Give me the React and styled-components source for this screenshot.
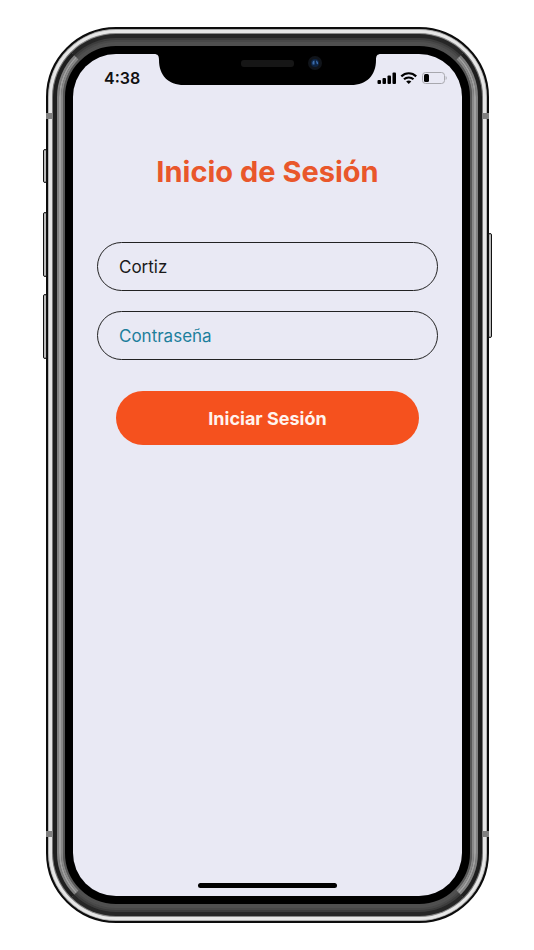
import { useState } from 'react';
import styled, { createGlobalStyle } from 'styled-components';

const GlobalStyle = createGlobalStyle`
  * {
    box-sizing: border-box;
  }

  body {
    margin: 0;
    background: #fff;
    font-family: Inter, 'Liberation Sans', sans-serif;
  }
`;

const Page = styled.main`
  padding: 27px 45px 27px 46px;
`;

//Phone
const Phone = styled.div`
  position: relative;
  display: flex;
  aspect-ratio: 443 / 896;
`;

const Ring = styled.div`
  display: flex;
  flex: 1;
  border: ${({ $width }) => $width}px solid;
  border-color: ${({ $ends, $sides }) => `${$ends} ${$sides}`};
  border-radius: ${({ $radius }) => $radius}px;
  background: ${({ $ends }) => $ends};
`;

const SideKey = styled.span`
  position: absolute;
  top: ${({ $top }) => $top}%;
  ${({ $side }) => $side}: -3px;
  width: 4px;
  height: ${({ $height }) => $height}%;
  border: 1px solid #111;
  border-radius: 2px;
  background: #bbb;
`;

const Antenna = styled.span`
  position: absolute;
  ${({ $edge }) => $edge}: 86px;
  ${({ $side }) => $side}: 0;
  width: 7px;
  height: 6px;
  background: #808080;
`;

const Screen = styled.div`
  position: relative;
  display: flex;
  flex: 1;
  flex-direction: column;
  border-radius: 43px;
  background: #e9e9f4;
`;

const NotchArea = styled.div`
  position: absolute;
  top: -1px;
  left: 0;
  right: 0;
  display: flex;
  justify-content: center;
`;

const NotchShape = styled.svg`
  display: block;
  width: 227px;
  height: 32px;
`;

//Status bar
const StatusBar = styled.header`
  display: flex;
  align-items: center;
  justify-content: space-between;
  height: 48px;
  padding: 0 15px 0 31px;
`;

const Time = styled.time`
  font-size: 16px;
  font-weight: 600;
  color: #111;
`;

const StatusIcons = styled.svg`
  width: 70px;
  height: 14px;
`;

//Form
const Form = styled.form`
  display: flex;
  flex: 1;
  flex-direction: column;
  gap: 20px;
  padding: 50px 24px 0;
`;

const Title = styled.h1`
  margin: 0 0 30px;
  font-size: 29px;
  font-weight: 700;
  line-height: 40px;
  text-align: center;
  color: #e9572b;
`;

const Field = styled.input`
  width: 100%;
  height: 49px;
  padding: 0 21px;
  border: 1px solid #222;
  border-radius: 25px;
  background: transparent;
  font-family: inherit;
  font-size: 17px;
  color: #1a1a1a;

  &::placeholder {
    color: #1d7f9c;
    opacity: 1;
  }
`;

const SubmitButton = styled.button`
  height: 54px;
  margin: 11px 19px 0;
  border: 0;
  border-radius: 27px;
  background: #f5511e;
  font-family: inherit;
  font-size: 18px;
  font-weight: 700;
  color: #fff3ee;
`;

const HomeBar = styled.div`
  align-self: center;
  width: 139px;
  height: 5px;
  margin-bottom: 8px;
  border-radius: 3px;
  background: #000;
`;

// from the outside in
const RINGS = [
  { width: 2, ends: '#0c0c0c', sides: '#0c0c0c' },
  { width: 1, ends: '#aaa', sides: '#b4b4b4' },
  { width: 3, ends: '#e6e6e6', sides: '#e6e6e6' },
  { width: 1, ends: '#8a8a8a', sides: '#777' },
  { width: 4, ends: '#262626', sides: '#1e1e1e' },
  { width: 2, ends: '#3c3c3c', sides: '#808080' },
  { width: 2, ends: '#484848', sides: '#a0a0a0' },
  { width: 2, ends: '#505050', sides: '#888' },
  { width: 2, ends: '#505050', sides: '#585858' },
  { width: 8, ends: '#000', sides: '#000' },
];

const KEYS = [
  { side: 'left', top: 13.6, height: 3.8 },
  { side: 'left', top: 20.6, height: 7.3 },
  { side: 'left', top: 29.8, height: 7.3 },
  { side: 'right', top: 23, height: 11.7 },
];

const Frame = ({ children }) => {
  let radius = 70;
  const rings = RINGS.map((ring) => {
    const current = { ...ring, radius };
    radius -= ring.width;
    return current;
  });

  return rings.reduceRight(
    (inner, ring) => (
      <Ring $width={ring.width} $ends={ring.ends} $sides={ring.sides} $radius={ring.radius}>
        {inner}
      </Ring>
    ),
    children
  );
};

const Notch = () => (
  <NotchArea>
    <NotchShape viewBox="0 0 227 32" aria-hidden="true">
      <path d="M0 0H227V1C223 1 222 3 222 7C222 22 213 32 197 32H30C14 32 5 22 5 7C5 3 4 1 0 1Z" fill="#000" />
      <rect x="87" y="7" width="53" height="7" rx="3" fill="#161616" />
      <circle cx="161" cy="10" r="7" fill="#10141a" />
      <circle cx="161" cy="10" r="4" fill="#0d2444" />
      <path d="M158.500 11.500C158 9 159 7.500 160.500 7.500V11.500Z" fill="#3b6cab" />
      <path d="M162 7.500C163.500 8 164.500 9.500 164 11.500L162.500 10.500Z" fill="#3b6cab" />
    </NotchShape>
  </NotchArea>
);

const Status = () => (
  <StatusBar>
    <Time>4:38</Time>
    <StatusIcons viewBox="0 0 70 14" aria-hidden="true">
      <g fill="#000">
        <rect x="0.500" y="9" width="3.500" height="4" rx="1" />
        <rect x="5.500" y="7" width="3.500" height="6" rx="1" />
        <rect x="10.500" y="4.500" width="3.500" height="8.500" rx="1" />
        <rect x="15.500" y="1.500" width="3.500" height="11.500" rx="1" />
      </g>
      <g fill="none" stroke="#000" strokeWidth="2.2">
        <path d="M24.300 5.400C28.500 1.200 35 1.200 39.200 5.400" />
        <path d="M27 8.300C29.600 5.900 33.900 5.900 36.500 8.300" />
      </g>
      <path d="M29.200 10.400C30.600 9.200 32.900 9.200 34.300 10.400L31.750 13Z" fill="#000" />
      <rect x="45.500" y="1.500" width="22" height="11" rx="3" fill="none" stroke="#a8a8ae" />
      <rect x="47" y="3" width="5" height="8" rx="1.500" fill="#000" />
      <path d="M68.700 5V9C70 8.500 70 5.500 68.700 5Z" fill="#a8a8ae" />
    </StatusIcons>
  </StatusBar>
);

const App = () => {
  const [user, setUser] = useState('Cortiz');
  const [password, setPassword] = useState('');

  const handleSubmit = (e) => {
    e.preventDefault();
  };

  return (
    <Page>
      <GlobalStyle />
      <Phone>
        {KEYS.map((key) => (
          <SideKey key={key.top} $side={key.side} $top={key.top} $height={key.height} />
        ))}
        <Frame>
          <Screen>
            <Notch />
            <Status />
            <Form onSubmit={handleSubmit}>
              <Title>Inicio de Sesión</Title>
              <Field
                type="text"
                aria-label="Usuario"
                value={user}
                onChange={(e) => setUser(e.target.value)}
              />
              <Field
                type="password"
                aria-label="Contraseña"
                placeholder="Contraseña"
                value={password}
                onChange={(e) => setPassword(e.target.value)}
              />
              <SubmitButton type="submit">Iniciar Sesión</SubmitButton>
            </Form>
            <HomeBar />
          </Screen>
        </Frame>
        <Antenna $edge="top" $side="left" />
        <Antenna $edge="top" $side="right" />
        <Antenna $edge="bottom" $side="left" />
        <Antenna $edge="bottom" $side="right" />
      </Phone>
    </Page>
  );
};

export default App;
